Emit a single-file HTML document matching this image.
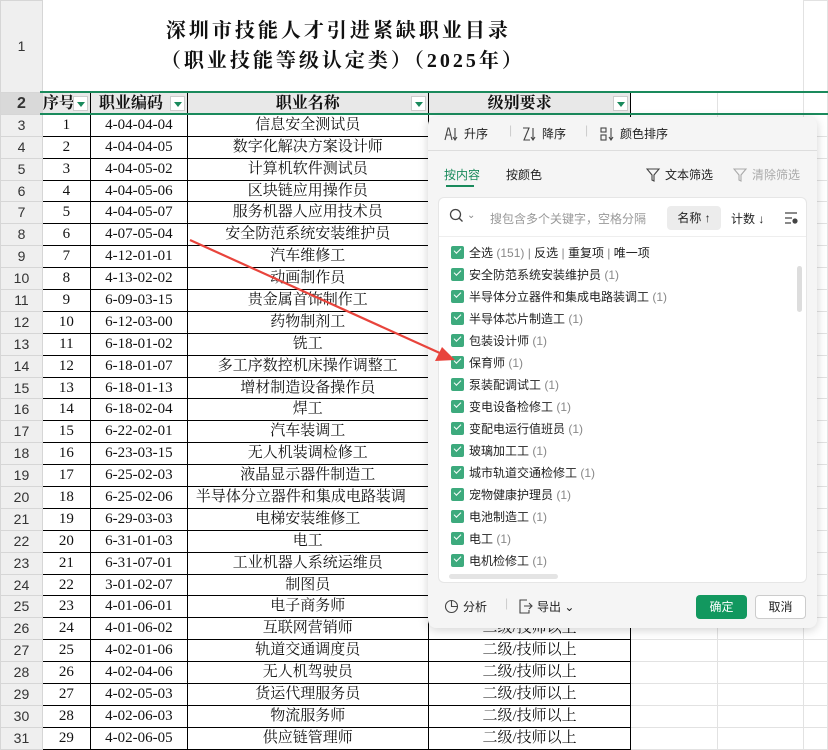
<!DOCTYPE html>
<html><head><meta charset="utf-8"><style>
*{margin:0;padding:0;box-sizing:border-box}
body{width:828px;height:743px;overflow:hidden;background:#fff;position:relative;font-family:"Liberation Serif","Noto Serif CJK SC",serif}
table{border-collapse:collapse;table-layout:fixed;position:absolute;left:0;top:0}
td{height:21.9px;padding:0;text-align:center;font-size:15px;color:#111;white-space:nowrap;overflow:hidden;border:1px solid #000;line-height:19px}
td.rh{background:#efefef;border:1px solid #d6d6d6;font-family:"Liberation Sans",sans-serif;font-size:14px;color:#333}
td.g{border:1px solid #e2e2e2}
tr.r1 td{height:92px}
tr.r1 td.t{border:none;border-right:1px solid #e2e2e2;font-weight:bold;font-size:20px;line-height:30px;text-align:left;padding-left:123px;letter-spacing:3px}
tr.h td{background:#e8e8e8;font-weight:bold;font-size:16px;position:relative}
.dd{position:absolute;right:2px;top:3px;width:15px;height:15px;background:#fff;border:1px solid #ccc}
.dd:after{content:"";position:absolute;left:3px;top:5px;border-left:4px solid transparent;border-right:4px solid transparent;border-top:5px solid #1a8a5c}
.panel{position:absolute;left:428px;top:117px;width:389px;height:511px;background:#f5f5f5;border-radius:8px;box-shadow:0 2px 10px rgba(0,0,0,.18);font-family:"Liberation Sans","Noto Sans CJK SC",sans-serif;font-size:12px;color:#222}
.a{position:absolute;white-space:nowrap}
.a svg{vertical-align:-3px;margin-right:4px}
.box{position:absolute;left:10px;top:80px;width:369px;height:386px;background:#fff;border-radius:6px;border:1px solid #e6e6e6}
.it{position:absolute;left:12px;height:16px;line-height:16px;white-space:nowrap}
.cb{display:inline-block;width:13px;height:13px;background:#3daa7d;border-radius:2px;vertical-align:-2px;margin-right:5px;position:relative}
.cb:after{content:"";position:absolute;left:3px;top:2px;width:6px;height:3px;border-left:1.6px solid #fff;border-bottom:1.6px solid #fff;transform:rotate(-45deg)}
.n{color:#888}
</style></head><body>
<table>
<colgroup><col style="width:42px"><col style="width:48px"><col style="width:97px"><col style="width:241px"><col style="width:203px"><col style="width:87px"><col style="width:86px"><col style="width:24px"></colgroup>
<tr class="r1"><td class="rh">1</td><td class="t" colspan="6">深圳市技能人才引进紧缺职业目录<br><span style="margin-left:-5px">（职业技能等级认定类）（2025年）</span></td><td class="g"></td></tr>
<tr class="h"><td class="rh" style="background:#d9d9d9">2</td><td style="text-align:left">序号<span class="dd"></span></td><td style="text-align:left;padding-left:8px">职业编码<span class="dd"></span></td><td>职业名称<span class="dd"></span></td><td style="padding-right:20px">级别要求<span class="dd"></span></td><td class="g" style="background:#fff"></td><td class="g" style="background:#fff"></td><td class="g" style="background:#fff"></td></tr>
<tr><td class="rh">3</td><td>1</td><td>4-04-04-04</td><td>信息安全测试员</td><td></td><td class="g"></td><td class="g"></td><td class="g"></td></tr>
<tr><td class="rh">4</td><td>2</td><td>4-04-04-05</td><td>数字化解决方案设计师</td><td></td><td class="g"></td><td class="g"></td><td class="g"></td></tr>
<tr><td class="rh">5</td><td>3</td><td>4-04-05-02</td><td>计算机软件测试员</td><td></td><td class="g"></td><td class="g"></td><td class="g"></td></tr>
<tr><td class="rh">6</td><td>4</td><td>4-04-05-06</td><td>区块链应用操作员</td><td></td><td class="g"></td><td class="g"></td><td class="g"></td></tr>
<tr><td class="rh">7</td><td>5</td><td>4-04-05-07</td><td>服务机器人应用技术员</td><td></td><td class="g"></td><td class="g"></td><td class="g"></td></tr>
<tr><td class="rh">8</td><td>6</td><td>4-07-05-04</td><td>安全防范系统安装维护员</td><td></td><td class="g"></td><td class="g"></td><td class="g"></td></tr>
<tr><td class="rh">9</td><td>7</td><td>4-12-01-01</td><td>汽车维修工</td><td></td><td class="g"></td><td class="g"></td><td class="g"></td></tr>
<tr><td class="rh">10</td><td>8</td><td>4-13-02-02</td><td>动画制作员</td><td></td><td class="g"></td><td class="g"></td><td class="g"></td></tr>
<tr><td class="rh">11</td><td>9</td><td>6-09-03-15</td><td>贵金属首饰制作工</td><td></td><td class="g"></td><td class="g"></td><td class="g"></td></tr>
<tr><td class="rh">12</td><td>10</td><td>6-12-03-00</td><td>药物制剂工</td><td></td><td class="g"></td><td class="g"></td><td class="g"></td></tr>
<tr><td class="rh">13</td><td>11</td><td>6-18-01-02</td><td>铣工</td><td></td><td class="g"></td><td class="g"></td><td class="g"></td></tr>
<tr><td class="rh">14</td><td>12</td><td>6-18-01-07</td><td>多工序数控机床操作调整工</td><td></td><td class="g"></td><td class="g"></td><td class="g"></td></tr>
<tr><td class="rh">15</td><td>13</td><td>6-18-01-13</td><td>增材制造设备操作员</td><td></td><td class="g"></td><td class="g"></td><td class="g"></td></tr>
<tr><td class="rh">16</td><td>14</td><td>6-18-02-04</td><td>焊工</td><td></td><td class="g"></td><td class="g"></td><td class="g"></td></tr>
<tr><td class="rh">17</td><td>15</td><td>6-22-02-01</td><td>汽车装调工</td><td></td><td class="g"></td><td class="g"></td><td class="g"></td></tr>
<tr><td class="rh">18</td><td>16</td><td>6-23-03-15</td><td>无人机装调检修工</td><td></td><td class="g"></td><td class="g"></td><td class="g"></td></tr>
<tr><td class="rh">19</td><td>17</td><td>6-25-02-03</td><td>液晶显示器件制造工</td><td></td><td class="g"></td><td class="g"></td><td class="g"></td></tr>
<tr><td class="rh">20</td><td>18</td><td>6-25-02-06</td><td style="text-align:left;padding-left:8px">半导体分立器件和集成电路装调</td><td></td><td class="g"></td><td class="g"></td><td class="g"></td></tr>
<tr><td class="rh">21</td><td>19</td><td>6-29-03-03</td><td>电梯安装维修工</td><td></td><td class="g"></td><td class="g"></td><td class="g"></td></tr>
<tr><td class="rh">22</td><td>20</td><td>6-31-01-03</td><td>电工</td><td></td><td class="g"></td><td class="g"></td><td class="g"></td></tr>
<tr><td class="rh">23</td><td>21</td><td>6-31-07-01</td><td>工业机器人系统运维员</td><td></td><td class="g"></td><td class="g"></td><td class="g"></td></tr>
<tr><td class="rh">24</td><td>22</td><td>3-01-02-07</td><td>制图员</td><td></td><td class="g"></td><td class="g"></td><td class="g"></td></tr>
<tr><td class="rh">25</td><td>23</td><td>4-01-06-01</td><td>电子商务师</td><td></td><td class="g"></td><td class="g"></td><td class="g"></td></tr>
<tr><td class="rh">26</td><td>24</td><td>4-01-06-02</td><td>互联网营销师</td><td>二级/技师以上</td><td class="g"></td><td class="g"></td><td class="g"></td></tr>
<tr><td class="rh">27</td><td>25</td><td>4-02-01-06</td><td>轨道交通调度员</td><td>二级/技师以上</td><td class="g"></td><td class="g"></td><td class="g"></td></tr>
<tr><td class="rh">28</td><td>26</td><td>4-02-04-06</td><td>无人机驾驶员</td><td>二级/技师以上</td><td class="g"></td><td class="g"></td><td class="g"></td></tr>
<tr><td class="rh">29</td><td>27</td><td>4-02-05-03</td><td>货运代理服务员</td><td>二级/技师以上</td><td class="g"></td><td class="g"></td><td class="g"></td></tr>
<tr><td class="rh">30</td><td>28</td><td>4-02-06-03</td><td>物流服务师</td><td>二级/技师以上</td><td class="g"></td><td class="g"></td><td class="g"></td></tr>
<tr><td class="rh">31</td><td>29</td><td>4-02-06-05</td><td>供应链管理师</td><td>二级/技师以上</td><td class="g"></td><td class="g"></td><td class="g"></td></tr>
</table>
<div style="position:absolute;left:40px;top:91px;width:788px;height:24px;border-top:2px solid #1a8a5c;border-bottom:2px solid #1a8a5c"></div>
<div class="panel">
<div class="a" style="left:16px;top:8px"><svg width="16" height="14" viewBox="0 0 16 14" fill="none" stroke="#444" stroke-width="1.1"><path d="M1 13L4 1h1l3 12M2.5 8h4M11 1v12M9 10l2 3 2-3"/></svg>升序</div>
<div class="a" style="left:81px;top:6px;color:#ccc">|</div>
<div class="a" style="left:94px;top:8px"><svg width="16" height="14" viewBox="0 0 16 14" fill="none" stroke="#444" stroke-width="1.1"><path d="M1 1h6L2 13h6M11 1v12M9 10l2 3 2-3"/></svg>降序</div>
<div class="a" style="left:157px;top:6px;color:#ccc">|</div>
<div class="a" style="left:172px;top:8px"><svg width="16" height="14" viewBox="0 0 16 14" fill="none" stroke="#444" stroke-width="1.1"><rect x="1" y="1" width="5" height="4"/><rect x="1" y="8" width="5" height="5"/><path d="M11 1v12M9 10l2 3 2-3"/></svg>颜色排序</div>
<div class="a" style="left:0;top:33px;width:389px;border-top:1px solid #ddd"></div>
<div class="a" style="left:16px;top:49px;color:#1a8a5c">按内容</div>
<div class="a" style="left:18px;top:68px;width:28px;height:2px;background:#1a8a5c"></div>
<div class="a" style="left:78px;top:49px">按颜色</div>
<div class="a" style="left:218px;top:49px"><svg width="15" height="14" viewBox="0 0 15 14" fill="none" stroke="#444" stroke-width="1.1"><path d="M1 1h12L8 7v6L6 12V7z"/></svg>文本筛选</div>
<div class="a" style="left:305px;top:49px;color:#aaa"><svg width="15" height="14" viewBox="0 0 15 14" fill="none" stroke="#aaa" stroke-width="1.1"><path d="M1 1h12L8 7v6L6 12V7z"/></svg>清除筛选</div>
<div class="box">
<div class="a" style="left:10px;top:10px"><svg width="18" height="16" viewBox="0 0 18 16" fill="none" stroke="#444" stroke-width="1.3"><circle cx="6.5" cy="6.5" r="5"/><path d="M10 10l3.5 3.5"/></svg></div>
<div class="a" style="left:28px;top:12px;color:#888;font-size:10px">⌄</div>
<div class="a" style="left:51px;top:12px;color:#999">搜包含多个关键字，空格分隔</div>
<div class="a" style="left:228px;top:8px;width:54px;height:24px;background:#ececec;border-radius:4px;text-align:center;line-height:24px">名称 ↑</div>
<div class="a" style="left:292px;top:12px">计数 ↓</div>
<div class="a" style="left:345px;top:12px"><svg width="14" height="12" viewBox="0 0 14 12" stroke="#444" stroke-width="1.2" fill="none"><path d="M1 1h12M1 6h7M1 11h6"/><circle cx="11" cy="9" r="2" fill="#444"/></svg></div>
<div class="a" style="left:0;top:38px;width:367px;border-top:1px solid #eee"></div>
<div class="it" style="top:47px"><span class="cb"></span>全选 <span class="n">(151)</span> <span class="n">|</span> 反选 <span class="n">|</span> 重复项 <span class="n">|</span> 唯一项</div>
<div class="it" style="top:69px"><span class="cb"></span>安全防范系统安装维护员 <span class="n">(1)</span></div>
<div class="it" style="top:91px"><span class="cb"></span>半导体分立器件和集成电路装调工 <span class="n">(1)</span></div>
<div class="it" style="top:113px"><span class="cb"></span>半导体芯片制造工 <span class="n">(1)</span></div>
<div class="it" style="top:135px"><span class="cb"></span>包装设计师 <span class="n">(1)</span></div>
<div class="it" style="top:157px"><span class="cb"></span>保育师 <span class="n">(1)</span></div>
<div class="it" style="top:179px"><span class="cb"></span>泵装配调试工 <span class="n">(1)</span></div>
<div class="it" style="top:201px"><span class="cb"></span>变电设备检修工 <span class="n">(1)</span></div>
<div class="it" style="top:223px"><span class="cb"></span>变配电运行值班员 <span class="n">(1)</span></div>
<div class="it" style="top:245px"><span class="cb"></span>玻璃加工工 <span class="n">(1)</span></div>
<div class="it" style="top:267px"><span class="cb"></span>城市轨道交通检修工 <span class="n">(1)</span></div>
<div class="it" style="top:289px"><span class="cb"></span>宠物健康护理员 <span class="n">(1)</span></div>
<div class="it" style="top:311px"><span class="cb"></span>电池制造工 <span class="n">(1)</span></div>
<div class="it" style="top:333px"><span class="cb"></span>电工 <span class="n">(1)</span></div>
<div class="it" style="top:355px"><span class="cb"></span>电机检修工 <span class="n">(1)</span></div>
<div class="a" style="left:358px;top:68px;width:5px;height:46px;background:#ddd;border-radius:3px"></div>
<div class="a" style="left:10px;top:376px;width:109px;height:5px;background:#e4e4e4;border-radius:3px"></div>
</div>
<div class="a" style="left:16px;top:481px"><svg width="15" height="15" viewBox="0 0 15 15" fill="none" stroke="#444" stroke-width="1.1"><circle cx="7.5" cy="7.5" r="6"/><path d="M7.5 1.5v6h6"/></svg>分析</div>
<div class="a" style="left:77px;top:479px;color:#ccc">|</div>
<div class="a" style="left:90px;top:481px"><svg width="15" height="15" viewBox="0 0 15 15" fill="none" stroke="#444" stroke-width="1.1"><path d="M9 1H2v13h9V11M6 7h8M11 4l3 3-3 3"/></svg>导出 ⌄</div>
<div class="a" style="left:268px;top:478px;width:51px;height:24px;background:#12985f;color:#fff;border-radius:4px;text-align:center;line-height:24px">确定</div>
<div class="a" style="left:327px;top:478px;width:51px;height:24px;background:#fff;border:1px solid #ccc;border-radius:4px;text-align:center;line-height:22px">取消</div>
</div>
<svg style="position:absolute;left:0;top:0" width="828" height="743"><line x1="190" y1="240" x2="442" y2="354" stroke="#e8443c" stroke-width="2.2"/><polygon points="455,360 435,361 442,347" fill="#e8443c"/></svg>
</body></html>
